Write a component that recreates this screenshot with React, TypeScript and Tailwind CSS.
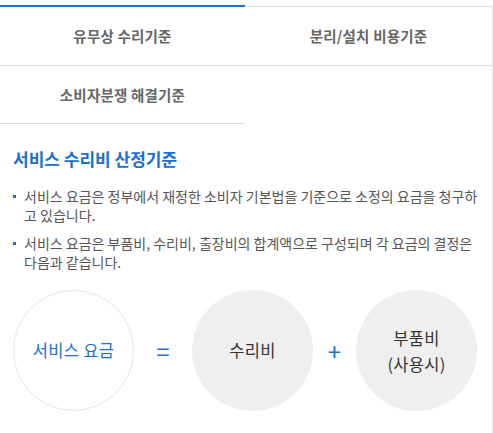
export default function App() {
  const font = { fontFamily: '"Noto Sans CJK KR", "Noto Sans", sans-serif' };

  return (
    <div className="w-[493px] h-[433px] bg-white pt-[5px] overflow-hidden" style={font}>
      <div className="border-r border-[#e6e6e6] h-full">
        <div className="grid grid-cols-[245px_1fr] items-start">
          <div className="h-[61px] border-t-2 border-[#1a73d0] border-b border-b-[#dedede] flex items-center justify-center text-[14.5px] font-bold text-[#666] tracking-[0.2px]">
            유무상 수리기준
          </div>
          <div className="h-[60px] mt-px border-t border-b border-[#dedede] flex items-center justify-center text-[14.5px] font-bold text-[#666] tracking-[0.2px]">
            분리/설치 비용기준
          </div>
          <div className="h-[58px] border-b border-[#dedede] flex items-center justify-center text-[14.5px] font-bold text-[#666] tracking-[0.2px]">
            소비자분쟁 해결기준
          </div>
        </div>

        <div className="px-[13px] pt-[23px]">
          <h2 className="text-[17px] font-bold text-[#1a6fd0] leading-[24px]">서비스 수리비 산정기준</h2>

          <ul className="mt-[16px] flex flex-col gap-[9px] text-[14px] leading-[19px] text-[#555] whitespace-nowrap">
            <li className="flex">
              <span className="w-[11px] shrink-0 relative">
                <span className="absolute left-0 top-[8px] w-[3px] h-[3px] bg-[#1a6fd0]"></span>
              </span>
              <span>
                서비스 요금은 정부에서 재정한 소비자 기본법을 기준으로 소정의 요금을 청구하
                <br />
                고 있습니다.
              </span>
            </li>
            <li className="flex">
              <span className="w-[11px] shrink-0 relative">
                <span className="absolute left-0 top-[8px] w-[3px] h-[3px] bg-[#1a6fd0]"></span>
              </span>
              <span>
                서비스 요금은 부품비, 수리비, 출장비의 합계액으로 구성되며 각 요금의 결정은
                <br />
                다음과 같습니다.
              </span>
            </li>
          </ul>

          <div className="mt-[18px] flex items-center">
            <div className="w-[121px] h-[121px] rounded-full border border-[#e6e6e6] flex items-center justify-center text-[16.5px] text-[#1a6fd0] tracking-[0.3px]">
              서비스 요금
            </div>
            <div className="w-[58px] text-center text-[24px] text-[#1a6fd0] leading-none">=</div>
            <div className="w-[121px] h-[121px] rounded-full bg-[#efefef] flex items-center justify-center text-[16.5px] text-[#333] tracking-[0.3px]">
              수리비
            </div>
            <div className="w-[43px] text-center text-[24px] text-[#1a6fd0] leading-none">+</div>
            <div className="w-[121px] h-[121px] rounded-full bg-[#efefef] flex flex-col items-center justify-center text-[16.5px] leading-[26px] text-[#333] tracking-[0.3px]">
              <span>부품비</span>
              <span>(사용시)</span>
            </div>
          </div>
        </div>
      </div>
    </div>
  );
}
